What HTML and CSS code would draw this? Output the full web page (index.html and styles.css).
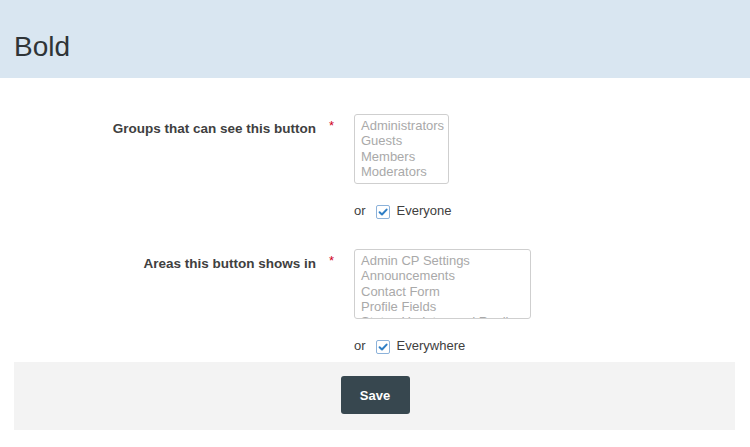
FILE: index.html
```html
<!DOCTYPE html>
<html lang="en">
<head>
<meta charset="utf-8">
<title>Bold</title>
<link rel="stylesheet" href="styles.css">
</head>
<body>
<header class="page-header">
  <h1 class="page-title">Bold</h1>
</header>
<form class="form">
  <div class="field">
    <div class="field-label">Groups that can see this button</div>
    <div class="field-req">*</div>
    <div class="field-control">
      <div class="listbox listbox-groups" role="listbox">
        <div class="opt">Administrators</div>
        <div class="opt">Guests</div>
        <div class="opt">Members</div>
        <div class="opt">Moderators</div>
      </div>
      <div class="or-row">
        <span class="or">or</span>
        <span class="check"><svg viewBox="0 0 14 14" width="14" height="14"><path d="M3.6 7.2 L6 9.5 L10.6 4.6" fill="none" stroke="#2f7fc6" stroke-width="2" stroke-linecap="round" stroke-linejoin="round"/></svg></span>
        <span class="check-label">Everyone</span>
      </div>
    </div>
  </div>
  <div class="field field-second">
    <div class="field-label">Areas this button shows in</div>
    <div class="field-req">*</div>
    <div class="field-control">
      <div class="listbox listbox-areas" role="listbox">
        <div class="opt">Admin CP Settings</div>
        <div class="opt">Announcements</div>
        <div class="opt">Contact Form</div>
        <div class="opt">Profile Fields</div>
        <div class="opt">Status Updates and Replies</div>
      </div>
      <div class="or-row">
        <span class="or">or</span>
        <span class="check"><svg viewBox="0 0 14 14" width="14" height="14"><path d="M3.6 7.2 L6 9.5 L10.6 4.6" fill="none" stroke="#2f7fc6" stroke-width="2" stroke-linecap="round" stroke-linejoin="round"/></svg></span>
        <span class="check-label">Everywhere</span>
      </div>
    </div>
  </div>
  <div class="form-footer">
    <button type="button" class="btn-save">Save</button>
  </div>
</form>
</body>
</html>
```

FILE: styles.css
```css
html, body {
  margin: 0;
  padding: 0;
  background: #ffffff;
}
body {
  font-family: "Liberation Sans", Arial, sans-serif;
  color: #404040;
  font-size: 13px;
}
.page-header {
  height: 78px;
  box-sizing: border-box;
  background: #d9e6f1;
  padding: 33px 14px 0;
}
.page-title {
  margin: 0;
  font-size: 28px;
  line-height: 28px;
  font-weight: normal;
  color: #2f3437;
}
.form {
  padding-top: 36px;
}
.field {
  display: grid;
  grid-template-columns: 316px 38px 1fr;
}
.field-second {
  margin-top: 30px;
}
.field-label {
  text-align: right;
  font-weight: bold;
  font-size: 13.5px;
  line-height: 16px;
  padding-top: 7px;
  color: #404040;
}
.field-req {
  color: #d0021b;
  line-height: 16px;
  padding-top: 4px;
  padding-left: 13px;
  font-size: 13px;
}
.field-control {
  display: flex;
  flex-direction: column;
  align-items: flex-start;
}
.listbox {
  box-sizing: border-box;
  height: 70px;
  border: 1px solid #cfcfcf;
  border-radius: 3px;
  padding: 3px 6px 0;
  overflow: hidden;
  background: #fff;
}
.listbox-groups {
  width: 95px;
}
.listbox-areas {
  width: 177px;
}
.opt {
  color: #a9a9a9;
  font-size: 13px;
  line-height: 15.3px;
  white-space: nowrap;
}
.or-row {
  display: flex;
  align-items: center;
  margin-top: 19px;
  height: 16px;
  line-height: 16px;
  color: #404040;
}
.or {
  margin-right: 10px;
}
.check {
  box-sizing: border-box;
  width: 14px;
  height: 14px;
  border: 1px solid #8cb2da;
  border-radius: 2px;
  background: #fff;
  display: flex;
  align-items: center;
  justify-content: center;
  margin-top: 2px;
}
.check svg {
  display: block;
  flex: none;
}
.check-label {
  margin-left: 7px;
}
.form-footer {
  margin: 8px 15px 0 14px;
  height: 68px;
  box-sizing: border-box;
  background: #f3f3f3;
  padding-top: 14px;
  display: flex;
  justify-content: center;
  align-items: flex-start;
}
.btn-save {
  width: 69px;
  height: 38px;
  margin-left: 1px;
  background: #37474f;
  color: #fff;
  border: 0;
  border-radius: 3px;
  font-family: "Liberation Sans", Arial, sans-serif;
  font-weight: bold;
  font-size: 13px;
  padding: 0;
  cursor: pointer;
}
```
